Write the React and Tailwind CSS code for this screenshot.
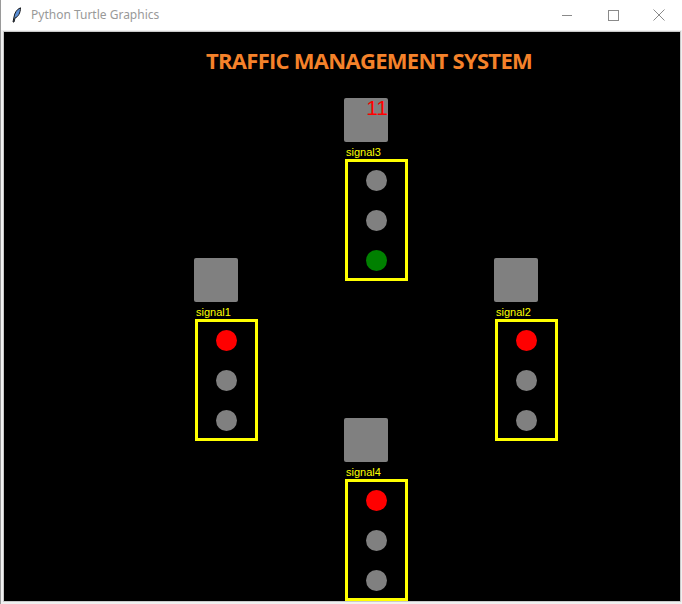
import React from 'react';

const signals = [
    { name: 'signal3', col: 'col-start-2 row-start-1', lights: ['gray', 'gray', 'green'], timer: '11' },
    { name: 'signal1', col: 'col-start-1 row-start-2', lights: ['red', 'gray', 'gray'] },
    { name: 'signal2', col: 'col-start-3 row-start-2', lights: ['red', 'gray', 'gray'] },
    { name: 'signal4', col: 'col-start-2 row-start-3', lights: ['red', 'gray', 'gray'] },
];

const lightColor = {
    red: 'bg-[#ff0000]',
    gray: 'bg-[#808080]',
    green: 'bg-[#008000]',
};

function Feather() {
    return (
        <svg width="10" height="16" viewBox="0 0 10 16">
            <path d="M8.5 0.8 C5 2 2.5 6 2 10 L1 15 L2 15 L3 11 C6 10 8.5 6 8.5 0.8 Z" fill="#5b8fd6" stroke="#1a1a1a" strokeWidth="1" />
        </svg>
    );
}

function Signal({ name, lights, timer }) {
    return (
        <div className="flex flex-col items-start">
            <div className="w-[44px] h-[44px] rounded-[2px] bg-[#808080] relative">
                {timer && (
                    <span className="absolute right-[0px] top-[-1px] text-[21px] leading-none text-[#ff0000] font-['Liberation_Sans',sans-serif]">
                        {timer}
                    </span>
                )}
            </div>
            <div className="h-[17px] pl-[2px] pt-[4px] text-[11px] leading-[12px] text-[#ffff00] font-['Liberation_Sans',sans-serif]">
                {name}
            </div>
            <div className="ml-[1px] w-[63px] h-[122px] border-[3px] border-[#ffff00] flex flex-col items-center pt-[8px] gap-[19px]">
                {lights.map((c, i) => (
                    <div key={i} className={`w-[21px] h-[21px] rounded-full ${lightColor[c]}`} />
                ))}
            </div>
        </div>
    );
}

export default function App() {
    return (
        <div className="w-[682px] h-[604px] bg-[#f0f0f0] border-l border-[#9a9a9a] flex flex-col overflow-hidden">
            {/* title bar */}
            <div className="h-[30px] bg-white flex items-center shrink-0">
                <div className="pl-[11px] pr-[9px] flex items-center">
                    <Feather />
                </div>
                <span className="text-[12px] text-[#999999] font-['Noto_Sans',sans-serif]">Python Turtle Graphics</span>
                <div className="ml-auto flex items-center h-full text-[#777]">
                    <div className="w-[46px] h-full flex items-center justify-center">
                        <div className="w-[10px] h-px bg-[#8a8a8a]" />
                    </div>
                    <div className="w-[46px] h-full flex items-center justify-center">
                        <div className="w-[11px] h-[11px] border border-[#8a8a8a]" />
                    </div>
                    <div className="w-[46px] h-full flex items-center justify-center">
                        <svg width="12" height="12" viewBox="0 0 12 12">
                            <path d="M0.5 0.5 L11.5 11.5 M11.5 0.5 L0.5 11.5" stroke="#8a8a8a" strokeWidth="1" />
                        </svg>
                    </div>
                </div>
            </div>

            {/* canvas */}
            <div className="mt-[1px] ml-[2px] mr-[1px] h-[571px] border border-[#c8c8c8] bg-black overflow-hidden">
                <div className="pt-[13px] pl-[202px] text-[22px] leading-[30px] font-bold text-[#f5822a] font-['Open_Sans',sans-serif] tracking-[-0.72px]">
                    TRAFFIC MANAGEMENT SYSTEM
                </div>
                <div className="mt-[23px] ml-[190px] grid grid-cols-[150px_150px_150px] grid-rows-[160px_160px_160px]">
                    {signals.map((s) => (
                        <div key={s.name} className={s.col}>
                            <Signal {...s} />
                        </div>
                    ))}
                </div>
            </div>
        </div>
    );
}
